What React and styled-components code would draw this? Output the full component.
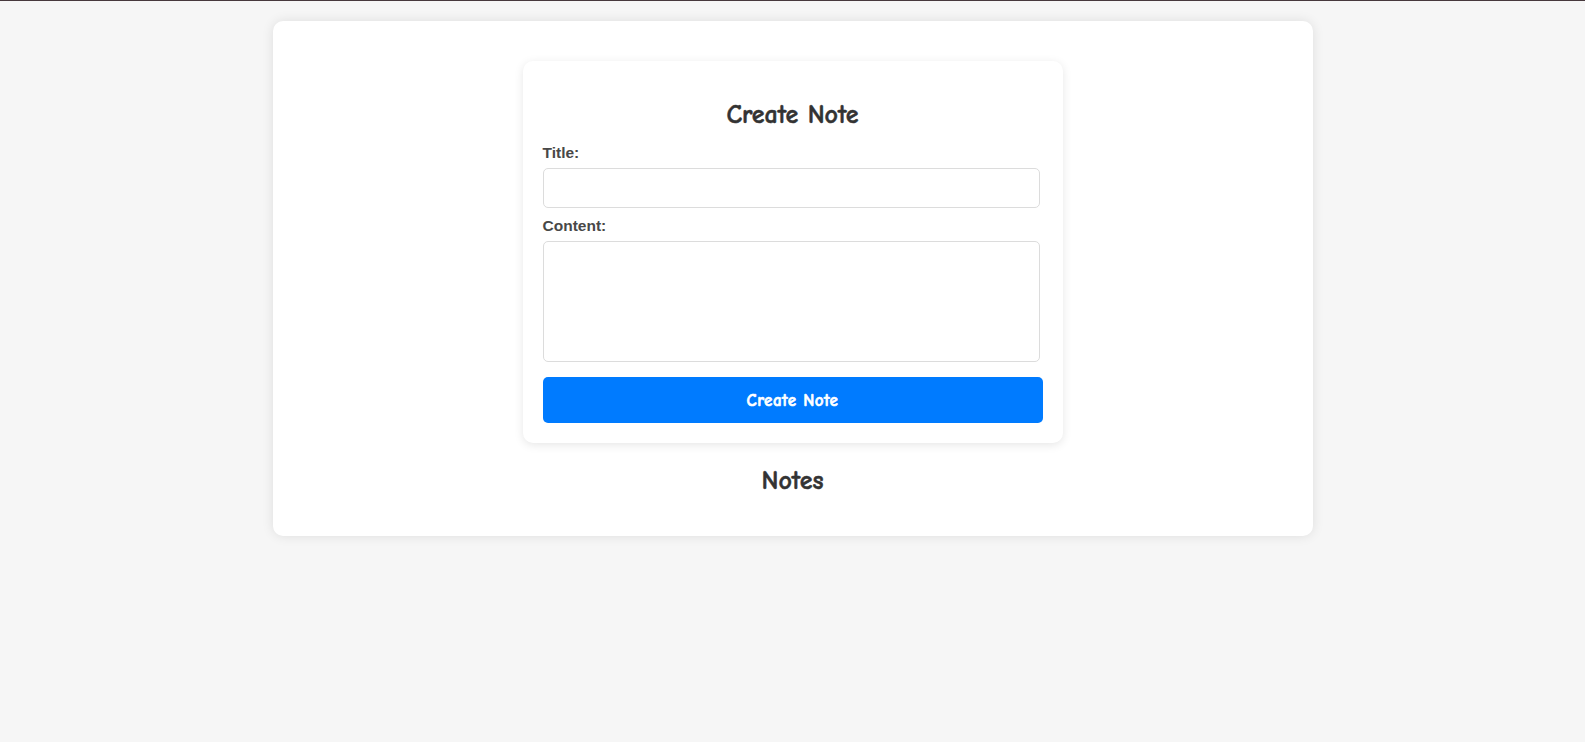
import React from "react";
import styled, { createGlobalStyle } from "styled-components";

const GlobalStyle = createGlobalStyle`
  html, body {
    margin: 0;
    padding: 0;
  }
  body {
    background: #f6f6f6;
    border-top: 1px solid #47393d;
    font-family: "Comic Sans MS", "Comic Neue", "Open Sans", sans-serif;
    color: #333;
    min-height: 741px;
    box-sizing: border-box;
  }
`;

const Page = styled.div`
  padding: 20px 0;
`;

const Container = styled.main`
  max-width: 1000px;
  margin: 0 auto;
  padding: 20px 20px 39px;
  background: #fff;
  border-radius: 10px;
  box-shadow: 0 0 12px rgba(0, 0, 0, 0.1);
`;

const FormCard = styled.form`
  max-width: 500px;
  margin: 20px auto 0;
  padding: 20px;
  background: #fff;
  border-radius: 10px;
  box-shadow: 0 2px 10px rgba(0, 0, 0, 0.1);
  display: flex;
  flex-direction: column;
`;

const Heading = styled.h2`
  margin: ${(p) => p.$mt || 0}px 0 ${(p) => p.$mb || 0}px;
  font-size: 26px;
  line-height: 32px;
  font-weight: 700;
  text-align: center;
  color: #333;
  -webkit-text-stroke: 0.5px #333;
`;

const Label = styled.label`
  display: block;
  font-family: "Liberation Sans", Arial, sans-serif;
  font-weight: 700;
  font-size: 15.5px;
  line-height: 18px;
  color: #484848;
  margin-bottom: 6px;
`;

const Field = styled.div`
  display: flex;
  flex-direction: column;
  margin-bottom: ${(p) => p.$mb}px;
`;

const Input = styled.input`
  box-sizing: border-box;
  width: calc(100% - 3px);
  height: 40px;
  padding: 8px 10px;
  border: 1px solid #dcdcdc;
  border-radius: 5px;
  font-size: 16px;
  background: #fff;
  outline: none;
`;

const TextArea = styled.textarea`
  box-sizing: border-box;
  width: calc(100% - 3px);
  height: 121px;
  padding: 8px 10px;
  border: 1px solid #dcdcdc;
  border-radius: 5px;
  font-size: 16px;
  resize: none;
  background: #fff;
  outline: none;
`;

const Button = styled.button`
  height: 46px;
  width: 100%;
  border: none;
  border-radius: 5px;
  background: #007bff;
  color: #fff;
  font-family: "Comic Sans MS", "Comic Neue", "Open Sans", sans-serif;
  font-size: 17px;
  font-weight: 700;
  letter-spacing: 0.5px;
  -webkit-text-stroke: 0.6px #fff;
  cursor: pointer;
`;

export default function App() {
  return (
    <>
      <GlobalStyle />
      <Page>
        <Container>
          <FormCard onSubmit={(e) => e.preventDefault()}>
            <Heading $mt={18} $mb={13}>Create Note</Heading>
            <Field $mb={9}>
              <Label htmlFor="title">Title:</Label>
              <Input id="title" type="text" />
            </Field>
            <Field $mb={15}>
              <Label htmlFor="content">Content:</Label>
              <TextArea id="content" />
            </Field>
            <Button type="submit">Create Note</Button>
          </FormCard>
          <Heading $mt={22}>Notes</Heading>
        </Container>
      </Page>
    </>
  );
}
